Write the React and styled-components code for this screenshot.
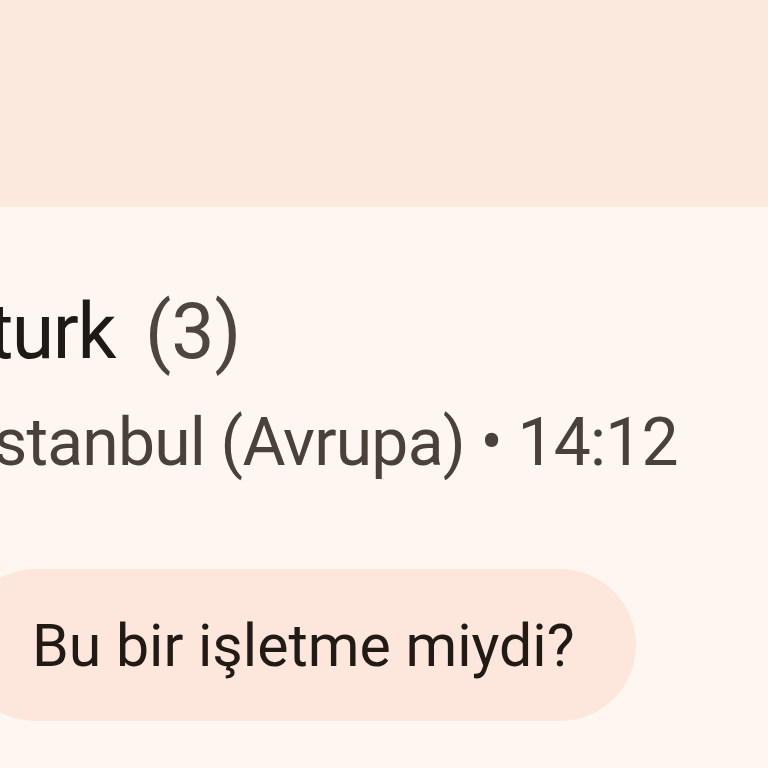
import React from "react"
import styled, { createGlobalStyle } from "styled-components"

const Global = createGlobalStyle`
html, body {
    margin:0;
    padding:0;
    background:#fef7f1;
    overflow:hidden;
}
body{
    font-family:Roboto, "Noto Sans", sans-serif;
}
`

const Page = styled.div`
width:768px;
height:768px;
overflow:hidden;
display:flex;
flex-direction:column;
background:#fef7f1;
`

const TopBand = styled.div`
height:207px;
flex-shrink:0;
background:#fce9de;
`

const Sheet = styled.div`
flex:1;
display:flex;
flex-direction:column;
padding-top:85px;
`

const Title = styled.div`
font-size:77px;
line-height:80px;
color:#1f1a16;
white-space:nowrap;
letter-spacing:-1.5px;
margin-left:${p => p.$shift}px;
span{
    color:#4f453f;
    letter-spacing:0;
    margin-left:30px;
}
`

const Meta = styled.div`
font-size:66px;
line-height:80px;
color:#4a413b;
white-space:nowrap;
letter-spacing:-0.8px;
margin-top:31px;
margin-left:${p => p.$shift}px;
`

const Chip = styled.button`
align-self:flex-start;
margin-top:86px;
margin-left:-40px;
height:152px;
padding:0 61px 0 72px;
border:none;
border-radius:76px;
background:#fde7dc;
color:#221a15;
font-family:Roboto, "Noto Sans", sans-serif;
font-size:59px;
white-space:nowrap;
`

export default function App(){
    return(
        <>
        <Global/>
        <Page>
            <TopBand/>
            <Sheet>
                <Title $shift={-100}>Ozturk<span>(3)</span></Title>
                <Meta $shift={-24}>İstanbul (Avrupa) • 14:12</Meta>
                <Chip>Bu bir işletme miydi?</Chip>
            </Sheet>
        </Page>
        </>
    )
}
